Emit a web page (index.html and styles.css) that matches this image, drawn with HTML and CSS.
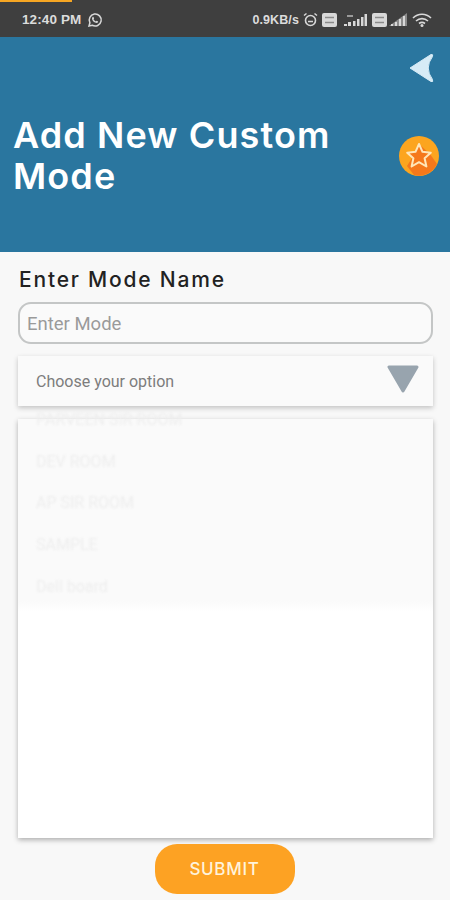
FILE: index.html
```html
<!DOCTYPE html>
<html>
<head>
    <title>Add New Custom Mode</title>
    <link rel="stylesheet" href="styles.css">
</head>
<body>
    <div class="progress"></div>

    <div class="status-bar">
        <div class="status-left">
            <span class="time">12:40 PM</span>
            <svg class="icon-whatsapp" width="16" height="16" viewBox="0 0 16 16">
                <path d="M2 14l.9-3.2A6 6 0 1 1 5.2 13.2z" fill="none" stroke="#d8d8d8" stroke-width="1.5"/>
                <path d="M5.6 5c.9-.8 1.3.9 1.5 1.5l-.6.8c.5 1 1.300 1.700 2.300 2.200l.8-.7c.7.200 1.700.700 1.500 1.300-.5 1.100-1.800 1.100-3 .5C6.600 10 5 8.200 5 6.500c0-.6.200-1.100.6-1.500z" fill="#d8d8d8"/>
            </svg>
        </div>
        <div class="status-right">
            <span class="speed">0.9KB/s</span>
            <svg width="15" height="15" viewBox="0 0 15 15">
                <circle cx="7.500" cy="8.500" r="5" fill="none" stroke="#d8d8d8" stroke-width="1.600"/>
                <path d="M5 9.500h5M1 3.500l2.500-2M14 3.500l-2.500-2" stroke="#d8d8d8" stroke-width="1.500" fill="none"/>
            </svg>
            <svg width="15" height="14" viewBox="0 0 15 14">
                <rect width="15" height="14" rx="2" fill="#d8d8d8"/>
                <path d="M3 4.500h9M3 9.500h9" stroke="#8a8a8a" stroke-width="1.500"/>
            </svg>
            <svg class="signal-wide" width="24" height="13" viewBox="0 0 24 13">
                <path d="M1 11h3v2H1zM5 9h3v4H5z" fill="#d8d8d8"/>
                <path d="M4 2h6v2H4z" fill="#9a9a9a"/>
                <path d="M10 8h2.500v5H10zM14 6h2.500v7H14zM18 4h2.500v9H18zM21.500 1H24v12h-2.500z" fill="#d8d8d8"/>
            </svg>
            <svg width="15" height="14" viewBox="0 0 15 14">
                <rect width="15" height="14" rx="2" fill="#d8d8d8"/>
                <path d="M3 4.500h9M3 9.500h9" stroke="#8a8a8a" stroke-width="1.500"/>
            </svg>
            <svg class="signal" width="18" height="13" viewBox="0 0 18 13">
                <path d="M0 13L18 0v13z" fill="#8c8c8c"/>
                <path d="M2 11h2v2H2zM6 9h2v4H6zM10 6h2v7h-2zM14 3h2v10h-2z" fill="#d8d8d8"/>
            </svg>
            <svg class="wifi" width="20" height="14" viewBox="0 0 20 14">
                <path d="M1 5c5-5 13-5 18 0M4 8c3.500-3.200 8.500-3.200 12 0M7 10.500c1.800-1.400 4.200-1.400 6 0" fill="none" stroke="#d8d8d8" stroke-width="1.600"/>
                <circle cx="10" cy="12.500" r="1.500" fill="#d8d8d8"/>
            </svg>
        </div>
    </div>

    <div class="header">
        <div class="header-top">
            <svg width="25" height="30" viewBox="0 0 25 30">
                <path d="M1 15L22 1.500Q24.500 1 23.500 3.500Q15 15 23.500 26.500Q24.500 29.500 22 28.500z" fill="#d6ebf6" stroke="#d6ebf6" stroke-linejoin="round"/>
            </svg>
        </div>
        <div class="header-title">
            <h1>Add New Custom Mode</h1>
            <svg class="star-badge" width="40" height="40" viewBox="0 0 40 40">
                <circle cx="20" cy="20" r="20" fill="#fca51f"/>
                <path d="M21 9L31 18L38 28A20 20 0 0 1 15 39L8 30z" fill="#f5781b"/>
                <path d="M20 8l3.500 7.800 8.300.9-6.200 5.600 1.800 8.200-7.400-4.300-7.400 4.300 1.800-8.200-6.200-5.600 8.300-.9z" fill="#f5781b" stroke="#ffe6b8" stroke-width="2" stroke-linejoin="round"/>
            </svg>
        </div>
    </div>

    <div class="main-container">
        <label class="field-label" for="modeName">Enter Mode Name</label>
        <input type="text" id="modeName" class="mode-input" placeholder="Enter Mode">

        <div class="dropdown">
            <span>Choose your option</span>
            <svg width="32" height="28" viewBox="0 0 32 28">
                <path d="M2 2h28L16 26z" fill="#98a4ae" stroke="#98a4ae" stroke-width="3" stroke-linejoin="round"/>
            </svg>
        </div>

        <div class="list-card">
            <ul class="options">
                <li>PARVEEN SIR ROOM</li>
                <li>DEV ROOM</li>
                <li>AP SIR ROOM</li>
                <li>SAMPLE</li>
                <li>Dell board</li>
            </ul>
        </div>

        <button class="submit-button">SUBMIT</button>
    </div>
</body>
</html>
```

FILE: styles.css
```css
/* GENERAL */
body {
    margin: 0;
    padding: 0;
    width: 450px;
    height: 900px;
    overflow: hidden;
    background-color: #f8f8f8;
    font-family: 'Inter', 'Liberation Sans', sans-serif;
    position: relative;
}

/* STATUS BAR */
.progress {
    position: absolute;
    top: 0;
    left: 0;
    width: 72px;
    height: 2px;
    background-color: #f6a623;
}

.status-bar {
    height: 37px;
    box-sizing: border-box;
    padding: 2px 18px 0 22px;
    display: flex;
    align-items: center;
    justify-content: space-between;
    background-color: #3f3f3f;
    color: #dcdcdc;
}

.status-left {
    display: flex;
    align-items: center;
    gap: 6px;
}

.status-right {
    display: flex;
    align-items: center;
    gap: 4px;
}

.time {
    font-family: 'Liberation Sans', sans-serif;
    font-size: 13.500px;
    font-weight: bold;
    letter-spacing: 0.1px;
}

.speed {
    font-family: 'Liberation Sans', sans-serif;
    font-size: 12.500px;
    font-weight: bold;
    letter-spacing: 0.1px;
}

.signal-wide {
    margin-left: 2px;
    margin-right: 1px;
}

.signal {
    margin-left: -2px;
}

.wifi {
    margin-left: 1px;
}

/* HEADER */
.header {
    height: 215px;
    box-sizing: border-box;
    padding: 16px 11px 0 13px;
    background-color: #2a769f;
}

.header-top {
    display: flex;
    justify-content: flex-end;
    padding-right: 5px;
}

.header-title {
    display: flex;
    align-items: center;
    justify-content: space-between;
    margin-top: 32px;
}

.header-title h1 {
    margin: 0;
    width: 340px;
    font-size: 36px;
    font-weight: 600;
    line-height: 41px;
    letter-spacing: 1.100px;
    color: #fff;
}

.star-badge {
    flex-shrink: 0;
    margin-top: -1px;
}

/* FORM */
.main-container {
    padding: 14px 17px 0 18px;
    display: flex;
    flex-direction: column;
}

.field-label {
    font-size: 21px;
    font-weight: 500;
    line-height: 28px;
    letter-spacing: 1.800px;
    color: #222;
    padding-left: 1px;
}

.mode-input {
    height: 42px;
    margin-top: 8px;
    padding: 2px 7px 0;
    box-sizing: border-box;
    border: 2px solid #c4c6c6;
    border-radius: 13px;
    outline: none;
    background-color: #fafafa;
    font-family: 'Roboto', sans-serif;
    font-size: 18.500px;
}

.mode-input::placeholder {
    color: #9a9a9a;
    opacity: 1;
}

/* DROPDOWN */
.dropdown {
    position: relative;
    z-index: 1;
    height: 50px;
    margin-top: 12px;
    padding: 0 14px 0 18px;
    display: flex;
    align-items: center;
    justify-content: space-between;
    background-color: #fafafa;
    box-shadow: 0 2px 5px rgba(0, 0, 0, 0.22);
    font-family: 'Roboto', sans-serif;
    font-size: 16px;
    color: #7d7d7d;
}

.dropdown svg {
    margin-top: -4px;
}

/* LIST */
.list-card {
    height: 419px;
    margin-top: 13px;
    background-color: #fff;
    box-shadow: 0 2px 5px rgba(0, 0, 0, 0.3);
}

.options {
    list-style: none;
    margin: 0;
    padding: 1px 0 0 18px;
    height: 192px;
    background: linear-gradient(#fafafa 94%, #fff);
    font-family: 'Roboto', sans-serif;
    font-size: 16px;
    color: #eee;
}

.options li {
    height: 41.700px;
    line-height: 0;
    position: relative;
    filter: blur(1px);
}

/* SUBMIT */
.submit-button {
    align-self: center;
    width: 140px;
    height: 50px;
    margin-top: 6px;
    margin-right: 2px;
    border: none;
    border-radius: 22px;
    background-color: #fda223;
    color: #fff3dc;
    font-family: 'Inter', sans-serif;
    font-size: 17px;
    font-weight: 500;
    letter-spacing: 0.700px;
}
```
